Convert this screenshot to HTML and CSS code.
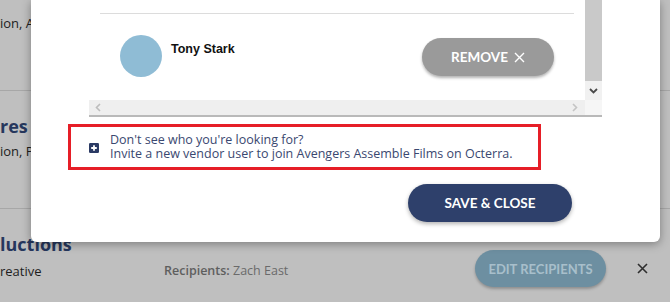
FILE: index.html
```html
<!DOCTYPE html>
<html>
<head>
<meta charset="utf-8">
<link rel="stylesheet" href="styles.css">
</head>
<body>
<div class="page">
  <section class="sec sec1">
    <p class="sub">ion, Animation</p>
  </section>
  <section class="sec sec2">
    <h2 class="heading">res</h2>
    <p class="sub">ion, Photography</p>
  </section>
  <section class="sec sec3">
    <div class="left">
      <h2 class="heading">luctions</h2>
      <p class="sub">reative</p>
    </div>
    <div class="recips"><span class="lbl">Recipients:</span> Zach East</div>
    <button class="edit-btn">EDIT RECIPIENTS</button>
    <span class="close-x"><svg width="11" height="11" viewBox="0 0 11 11"><path d="M1 1L10 10M10 1L1 10" stroke="#2e2e2e" stroke-width="1.6" fill="none"/></svg></span>
  </section>
</div>

<div class="modal">
  <div class="scrollbox">
    <div class="viewport">
      <div class="divider"></div>
      <div class="user-row">
        <div class="avatar"></div>
        <div class="name">Tony Stark</div>
        <button class="remove-btn">REMOVE <svg width="11" height="11" viewBox="0 0 11 11"><path d="M1 1L10 10M10 1L1 10" stroke="#fff" stroke-width="1.4" fill="none"/></svg></button>
      </div>
    </div>
    <div class="vbar">
      <div class="thumb"></div>
      <div class="down"><svg width="9" height="6" viewBox="0 0 9 6"><path d="M1 1L4.5 4.5L8 1" stroke="#4a4a4a" stroke-width="1.8" fill="none"/></svg></div>
    </div>
    <div class="hbar">
      <svg width="6" height="9" viewBox="0 0 6 9"><path d="M5 1L1.5 4.5L5 8" stroke="#bdbdbd" stroke-width="1.6" fill="none"/></svg>
      <svg width="6" height="9" viewBox="0 0 6 9"><path d="M1 1L4.5 4.5L1 8" stroke="#c4c4c4" stroke-width="1.6" fill="none"/></svg>
    </div>
    <div class="corner"></div>
  </div>

  <div class="invite">
    <span class="plus"><svg width="10" height="10" viewBox="0 0 10 10"><rect width="10" height="10" rx="1.2" fill="#2b3a64"/><path d="M5 2.2V7.8M2.2 5H7.8" stroke="#fff" stroke-width="1.8"/></svg></span>
    <div class="invite-text">Don't see who you're looking for?<br>Invite a new vendor user to join Avengers Assemble Films on Octerra.</div>
  </div>

  <div class="actions">
    <button class="save-btn">SAVE &amp; CLOSE</button>
  </div>
</div>
</body>
</html>
```
FILE: styles.css
```css
html, body {
  margin: 0;
  padding: 0;
}
body {
  width: 670px;
  height: 302px;
  overflow: hidden;
  background: #bfbfbf;
  font-family: "Open Sans", sans-serif;
  position: relative;
}
.page {
  width: 670px;
}
.sec {
  border-bottom: 1px solid #a7a7a7;
  box-sizing: border-box;
}
.sec1 {
  height: 91px;
  padding-top: 14px;
}
.sec2 {
  height: 118px;
  padding-top: 23px;
}
.sub {
  margin: 0;
  font-size: 13px;
  line-height: 18px;
  color: #1d1d1d;
  white-space: nowrap;
}
.heading {
  margin: 0;
  font-size: 18px;
  line-height: 24px;
  font-weight: 700;
  color: #26375d;
  white-space: nowrap;
}
.sec2 .sub {
  margin-top: 4px;
}
.sec3 {
  border-bottom: none;
  display: flex;
  align-items: flex-start;
  padding: 23px 22px 0 0;
}
.sec3 .left {
  width: 164px;
  flex: none;
}
.sec3 .sub {
  margin-top: 6px;
}
.recips {
  flex: 1;
  margin-top: 30px;
  font-size: 12.5px;
  line-height: 18px;
  color: #6a6a6a;
}
.recips .lbl {
  font-weight: 600;
  color: #5e5e5e;
}
.edit-btn {
  margin-top: 18px;
  width: 131px;
  height: 37px;
  border: none;
  border-radius: 19px;
  background: #6d8fa1;
  color: #a8bfcb;
  font-family: Lato, sans-serif;
  font-weight: 700;
  font-size: 13px;
  padding: 0;
  box-shadow: 0 2px 3px rgba(0,0,0,0.25);
}
.close-x {
  margin-top: 31px;
  margin-left: 31px;
  width: 11px;
  height: 11px;
  display: block;
  line-height: 0;
}

.modal {
  position: absolute;
  left: 31px;
  top: 0;
  width: 629px;
  box-sizing: border-box;
  padding: 0 58px 20px 58px;
  background: #fff;
  border-radius: 0 0 6px 6px;
  box-shadow: 0 2px 10px rgba(0,0,0,0.35);
}
.scrollbox {
  display: grid;
  grid-template-columns: 1fr 17px;
  grid-template-rows: 100px 15px;
  border-bottom: 2px solid #b9b9b9;
}
.viewport {
  overflow: hidden;
  padding: 13px 11px 0 11px;
}
.divider {
  border-top: 1px solid #dcdcdc;
}
.user-row {
  display: flex;
  align-items: flex-start;
  padding: 21px 20px 0 20px;
}
.avatar {
  width: 42px;
  height: 42px;
  border-radius: 50%;
  background: #8fbcd5;
  flex: none;
}
.name {
  margin-left: 9px;
  margin-top: 6px;
  font-family: "Liberation Sans", Arial, sans-serif;
  font-weight: 700;
  font-size: 12.5px;
  line-height: 16px;
  color: #111;
  flex: 1;
}
.remove-btn {
  margin-top: 3px;
  width: 132px;
  height: 38px;
  border: none;
  border-radius: 19px;
  background: #9a9a9a;
  color: #fff;
  font-family: Lato, sans-serif;
  font-weight: 700;
  font-size: 13.5px;
  padding: 0;
  display: flex;
  align-items: center;
  justify-content: center;
  gap: 6px;
  box-shadow: 0 2px 3px rgba(0,0,0,0.3);
}
.vbar {
  background: #f1f1f1;
  display: flex;
  flex-direction: column;
}
.thumb {
  height: 81px;
  background: #c9c9c9;
}
.down {
  flex: 1;
  display: flex;
  align-items: center;
  justify-content: center;
}
.down svg {
  display: block;
}
.hbar {
  background: #efefef;
  display: flex;
  align-items: center;
  justify-content: space-between;
  padding: 0 7px 0 6px;
}
.hbar svg {
  display: block;
}
.corner {
  background: #f6f6f6;
}

.invite {
  margin: 7px 0 0 -21px;
  width: 473px;
  height: 46px;
  box-sizing: border-box;
  border: 3px solid #e61e27;
  display: flex;
  align-items: center;
  padding-left: 18px;
}
.plus {
  display: block;
  line-height: 0;
  margin-top: 2px;
}
.invite-text {
  margin-left: 11px;
  font-size: 12.5px;
  line-height: 14px;
  color: #3a4870;
  white-space: nowrap;
}
.actions {
  display: flex;
  justify-content: flex-end;
  padding-top: 14px;
  padding-right: 30px;
}
.save-btn {
  width: 164px;
  height: 38px;
  border: none;
  border-radius: 19px;
  background: #2e406b;
  color: #fff;
  font-family: Lato, sans-serif;
  font-weight: 700;
  font-size: 13.5px;
  padding: 0;
  box-shadow: 0 2px 4px rgba(0,0,0,0.3);
}
```
